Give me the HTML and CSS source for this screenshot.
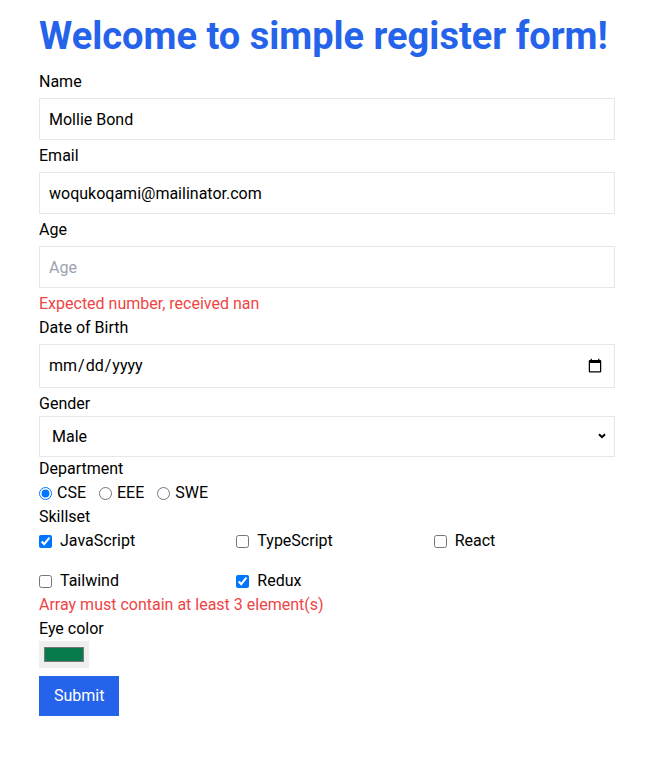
FILE: index.html
```html
<!DOCTYPE html>
<html lang="en">
<head>
<meta charset="utf-8">
<title>Register form</title>
<link rel="stylesheet" href="styles.css">
</head>
<body>
<main class="page">
  <h1 class="title">Welcome to simple register form!</h1>
  <form class="form">
    <label class="label" for="name">Name</label>
    <input class="field" id="name" type="text" value="Mollie Bond">

    <label class="label" for="email">Email</label>
    <input class="field" id="email" type="email" value="woqukoqami@mailinator.com">

    <label class="label" for="age">Age</label>
    <input class="field" id="age" type="number" placeholder="Age">
    <p class="error">Expected number, received nan</p>

    <label class="label" for="dob">Date of Birth</label>
    <input class="field field-date" id="dob" type="date">

    <label class="label" for="gender">Gender</label>
    <div class="select-wrap">
      <select class="field field-select" id="gender">
        <option>Male</option>
        <option>Female</option>
      </select>
      <svg class="chevron" width="8" height="6" viewBox="0 0 8 6"><path d="M1 1.2 L4 4.2 L7 1.2" fill="none" stroke="#000" stroke-width="2"/></svg>
    </div>

    <span class="label">Department</span>
    <div class="radios">
      <label class="radio"><input type="radio" name="dep" checked><span>CSE</span></label>
      <label class="radio"><input type="radio" name="dep"><span>EEE</span></label>
      <label class="radio"><input type="radio" name="dep"><span>SWE</span></label>
    </div>

    <span class="label">Skillset</span>
    <div class="skills">
      <label class="check"><input type="checkbox" checked><span>JavaScript</span></label>
      <label class="check"><input type="checkbox"><span>TypeScript</span></label>
      <label class="check"><input type="checkbox"><span>React</span></label>
      <label class="check"><input type="checkbox"><span>Tailwind</span></label>
      <label class="check"><input type="checkbox" checked><span>Redux</span></label>
    </div>
    <p class="error">Array must contain at least 3 element(s)</p>

    <label class="label" for="eye">Eye color</label>
    <input class="color" id="eye" type="color" value="#087a4c">

    <button class="submit" type="submit">Submit</button>
  </form>
</main>
</body>
</html>
```

FILE: styles.css
```css
* { box-sizing: border-box; }
html, body { margin: 0; padding: 0; background: #fff; }
body {
  font-family: Roboto, "Open Sans", sans-serif;
  font-size: 16px;
  line-height: 24px;
  color: #000;
}
.page {
  width: 576px;
  margin-left: 39px;
  padding-top: 16px;
}
.title {
  margin: 0 0 14px;
  font-size: 38px;
  line-height: 40px;
  font-weight: 700;
  color: #2563eb;
  white-space: nowrap;
}
.form {
  display: flex;
  flex-direction: column;
  align-items: flex-start;
}
.label {
  display: block;
  line-height: 24px;
}
.field {
  width: 100%;
  height: 42px;
  margin: 4px 0;
  padding: 8px 9px;
  border: 1px solid #e5e7eb;
  border-radius: 0;
  font: inherit;
  color: #000;
  background: #fff;
  outline: none;
}
.field::placeholder { color: #9ca3af; }
.field-date { height: 44px; padding-left: 8px; }
.select-wrap {
  position: relative;
  width: 100%;
}
.field-select {
  appearance: none;
  -webkit-appearance: none;
  height: 41px;
  margin: 0;
  padding: 6px 12px;
}
.chevron {
  position: absolute;
  right: 9px;
  top: 17px;
}
.error {
  margin: 0;
  color: #ef4444;
  line-height: 24px;
}
.radios {
  display: flex;
  gap: 13px;
  height: 24px;
  align-items: center;
}
.radio, .check {
  display: flex;
  align-items: center;
}
.radio input {
  width: 13px;
  height: 13px;
  margin: 0 5px 0 0;
}
.skills {
  width: 100%;
  display: grid;
  grid-template-columns: repeat(3, 1fr);
  gap: 16px;
}
.check input {
  width: 13px;
  height: 13px;
  margin: 0 8px 0 0;
}
.color {
  width: 50px;
  height: 27px;
  margin: 0;
  padding: 1px 2px;
  border: 1px solid #efefef;
  background: #efefef;
}
.submit {
  margin-top: 8px;
  padding: 8px 15px;
  height: 40px;
  border: 0;
  background: #2563eb;
  color: #fff;
  font: inherit;
  line-height: 24px;
  cursor: pointer;
}
```
